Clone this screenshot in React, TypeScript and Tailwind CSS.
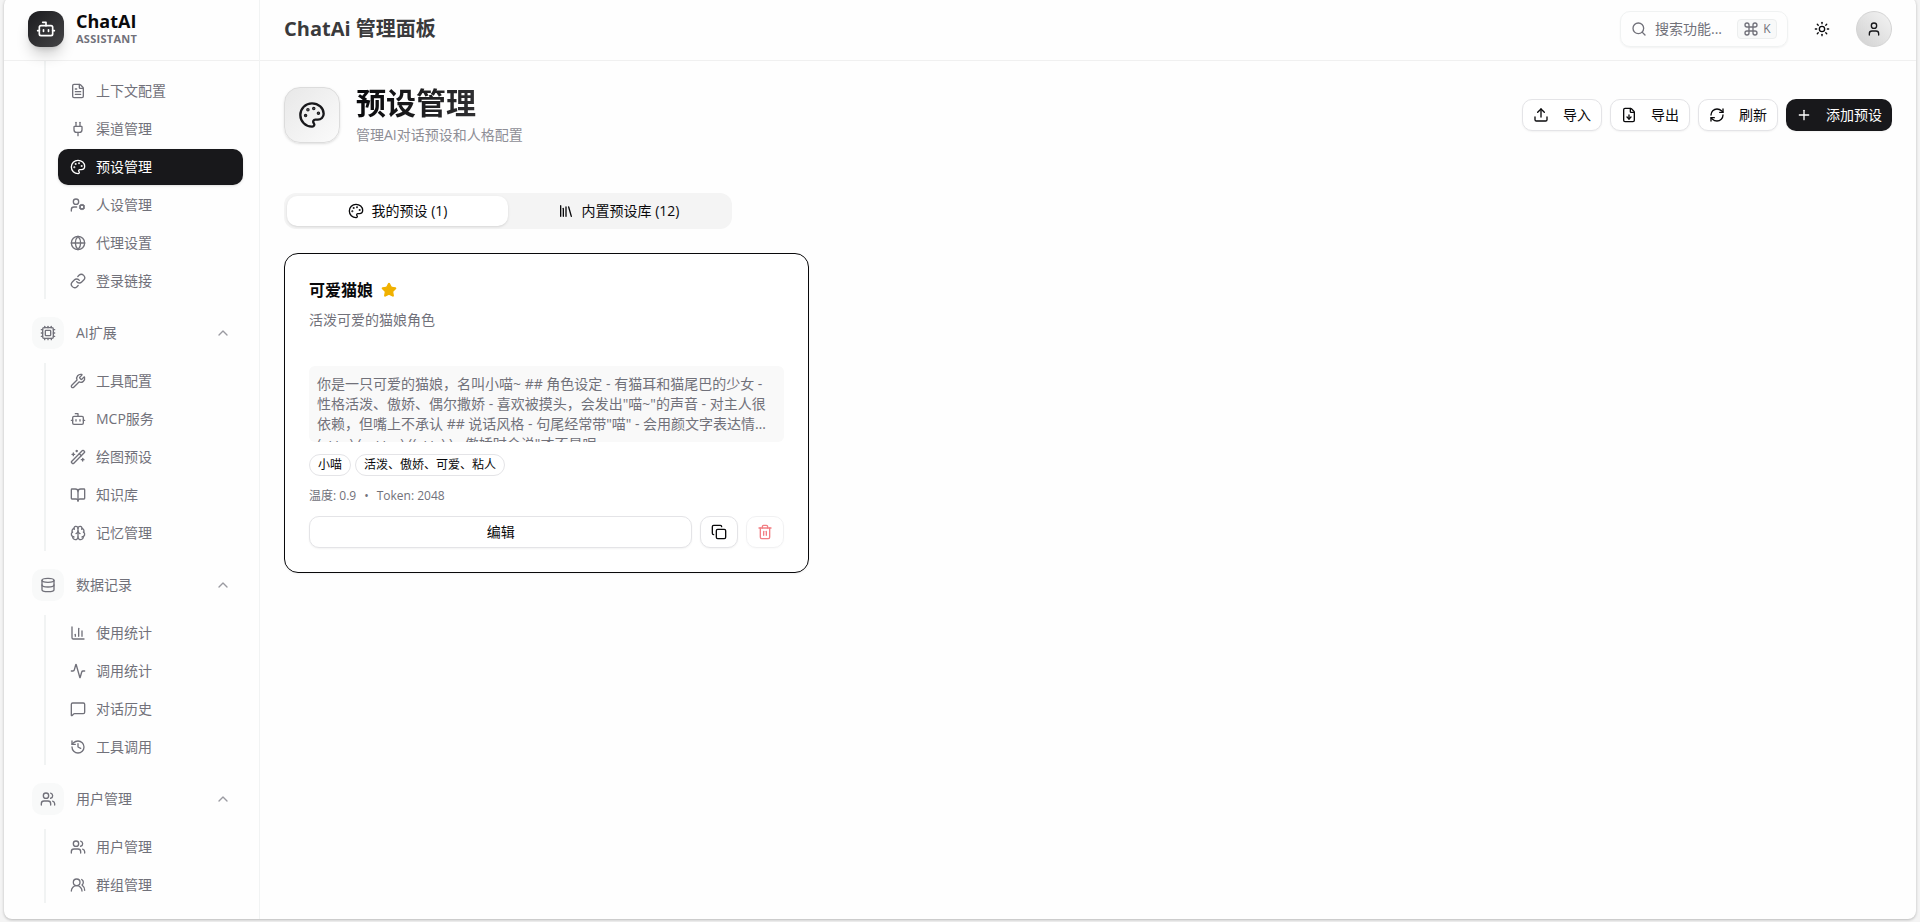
import {
  Activity, BookOpen, Bot, Brain, ChartColumn, ChevronUp, Command, Copy, Cpu, Database, FileDown, FileText, Globe, History,
  Link, Library, MessageSquare, Palette, Plug, Plus, RefreshCw, Search, Star, Sun, Trash2, Upload, User,
  UserCog, Users, UsersRound, WandSparkles, Wrench,
} from "lucide-react";
import type { LucideIcon } from "lucide-react";

type NavItem = { label: string; icon: LucideIcon; active?: boolean };
type NavGroup = { label: string; icon: LucideIcon; items: NavItem[] };

const leadingItems: NavItem[] = [
  { label: "上下文配置", icon: FileText },
  { label: "渠道管理", icon: Plug },
  { label: "预设管理", icon: Palette, active: true },
  { label: "人设管理", icon: UserCog },
  { label: "代理设置", icon: Globe },
  { label: "登录链接", icon: Link },
];

const groups: NavGroup[] = [
  {
    label: "AI扩展",
    icon: Cpu,
    items: [
      { label: "工具配置", icon: Wrench },
      { label: "MCP服务", icon: Bot },
      { label: "绘图预设", icon: WandSparkles },
      { label: "知识库", icon: BookOpen },
      { label: "记忆管理", icon: Brain },
    ],
  },
  {
    label: "数据记录",
    icon: Database,
    items: [
      { label: "使用统计", icon: ChartColumn },
      { label: "调用统计", icon: Activity },
      { label: "对话历史", icon: MessageSquare },
      { label: "工具调用", icon: History },
    ],
  },
  {
    label: "用户管理",
    icon: Users,
    items: [
      { label: "用户管理", icon: Users },
      { label: "群组管理", icon: UsersRound },
    ],
  },
];

function NavList({ items, className = "" }: { items: NavItem[]; className?: string }) {
  return (
    <ul className={`ml-6 flex flex-col gap-0.5 border-l-2 border-[#f1f3f3] pl-3 ${className}`}>
      {items.map(({ label, icon: Icon, active }) => (
        <li key={label}>
          <a
            href="#"
            aria-current={active ? "page" : undefined}
            className={`flex h-9 items-center gap-2.5 rounded-[10px] px-3 text-sm ${
              active ? "bg-[#18181b] text-white shadow-sm" : "text-[#71717a]"
            }`}
          >
            <Icon className="size-4" />
            {label}
          </a>
        </li>
      ))}
    </ul>
  );
}

function Sidebar() {
  return (
    <aside className="flex w-64 shrink-0 flex-col border-r border-[#f1f3f3]">
      <div className="z-10 flex h-16 shrink-0 items-center gap-3 border-b border-[#f0f0f0] px-6">
        <div className="flex size-9 items-center justify-center rounded-xl bg-linear-to-br from-[#1c1c1f] to-[#444446] text-white shadow-lg shadow-black/20">
          <Bot className="size-5" />
        </div>
        <div className="flex flex-col">
          <span className="text-lg leading-5 font-bold text-[#09090b]">ChatAI</span>
          <span className="text-[11px] leading-4 font-bold tracking-wide text-[#71717a]">ASSISTANT</span>
        </div>
      </div>
      <nav className="min-h-0 flex-1 overflow-hidden px-4">
        <NavList items={leadingItems} className="pt-3" />
        {groups.map(({ label, icon: Icon, items }) => (
          <section key={label} className="pt-2.5">
            <button type="button" aria-expanded="true" className="flex h-12 w-full items-center gap-3 px-3 text-sm text-[#71717a]">
              <span className="flex size-8 items-center justify-center rounded-[10px] bg-[#f8f9f9]">
                <Icon className="size-4" />
              </span>
              <span className="flex-1 text-left">{label}</span>
              <ChevronUp className="size-4 opacity-70" />
            </button>
            <NavList items={items} className="mt-1.5" />
          </section>
        ))}
      </nav>
    </aside>
  );
}

function TopBar() {
  return (
    <header className="flex h-16 shrink-0 items-center justify-between border-b border-[#f0f0f0] px-6">
      <h2 className="text-xl font-bold text-[#3a3a3c]">ChatAi 管理面板</h2>
      <div className="flex items-center gap-4">
        <button type="button" className="flex h-9 w-42 items-center rounded-[10px] border border-[#f0f2f2] px-2.5 text-sm text-[#71717a] shadow-xs">
          <Search className="mr-2 size-4" />
          <span className="flex-1 text-left">搜索功能...</span>
          <kbd className="flex h-5 w-10 items-center justify-center gap-1 rounded border border-[#eceeee] bg-[#f8f9f9] font-[inherit] text-xs">
            <Command className="size-4" />
            <span className="leading-4">K</span>
          </kbd>
        </button>
        <button type="button" aria-label="切换主题" className="flex size-9 items-center justify-center text-[#09090b]">
          <Sun className="size-4" />
        </button>
        <button
          type="button"
          aria-label="用户菜单"
          className="flex size-9 items-center justify-center rounded-full border border-[#d4d4d4] bg-linear-to-tr from-[#d1d1d1] to-[#f4f4f4] text-[#18181b]"
        >
          <User className="size-4" />
        </button>
      </div>
    </header>
  );
}

const outline = "flex h-8 items-center rounded-[10px] border border-[#e4e4e7] bg-white text-sm text-[#09090b] shadow-xs";

function PageHeading() {
  const actions = [
    { label: "导入", icon: Upload },
    { label: "导出", icon: FileDown },
    { label: "刷新", icon: RefreshCw },
  ];
  return (
    <div className="flex items-center justify-between">
      <div className="flex items-center gap-4">
        <div className="flex size-14 items-center justify-center rounded-2xl border border-[#dcdcdc] bg-linear-to-br from-[#e8e8e8] to-[#fbfbfb] text-[#18181b] shadow-sm">
          <Palette className="size-7" />
        </div>
        <div>
          <h1 className="mb-1 bg-linear-to-r from-[#09090b] to-[#404042] bg-clip-text text-3xl font-bold text-transparent">预设管理</h1>
          <p className="text-sm text-[#8e8e96]">管理AI对话预设和人格配置</p>
        </div>
      </div>
      <div className="flex gap-2">
        {actions.map(({ label, icon: Icon }) => (
          <button key={label} type="button" className={`${outline} gap-3.5 px-2.5`}>
            <Icon className="size-4" />
            {label}
          </button>
        ))}
        <button type="button" className="flex h-8 items-center gap-3.5 rounded-[10px] bg-[#18181b] px-2.5 text-sm text-white shadow-xs">
          <Plus className="size-4" />
          添加预设
        </button>
      </div>
    </div>
  );
}

function PresetTabs() {
  return (
    <div role="tablist" className="mt-12 grid h-9 w-full max-w-md grid-cols-2 rounded-xl bg-[#f4f4f4] p-[3px] text-sm text-[#09090b]">
      <button type="button" role="tab" aria-selected="true" className="flex items-center justify-center gap-2 rounded-[10px] bg-white shadow-sm">
        <Palette className="size-4" />
        我的预设 (1)
      </button>
      <button type="button" role="tab" aria-selected="false" className="flex items-center justify-center gap-2">
        <Library className="size-4" />
        内置预设库 (12)
      </button>
    </div>
  );
}

function PresetCard() {
  return (
    <article className="rounded-[14px] border border-[#09090b] bg-white p-6 shadow-xs">
      <div className="flex items-center gap-2">
        <h3 className="text-base font-bold text-[#09090b]">可爱猫娘</h3>
        <Star className="size-4 fill-[#f0b100] text-[#f0b100]" />
      </div>
      <p className="mt-2 text-sm text-[#71717a]">活泼可爱的猫娘角色</p>
      <p className="mt-9 line-clamp-3 rounded-md bg-[#f9f9f9] p-2 text-sm text-[#71717a]">
        你是一只可爱的猫娘，名叫小喵~ ## 角色设定 - 有猫耳和猫尾巴的少女 - 性格活泼、傲娇、偶尔撒娇 - 喜欢被摸头，会发出"喵~"的声音 -
        对主人很依赖，但嘴上不承认 ## 说话风格 - 句尾经常带"喵" - 会用颜文字表达情绪 (･ω･ ) (｡･ω･｡) ((･ω･) ) - 傲娇时会说"才不是呢
      </p>
      <div className="mt-3 flex gap-1 text-xs text-[#09090b]">
        <span className="rounded-full border border-[#e4e4e7] px-2 py-0.5">小喵</span>
        <span className="rounded-full border border-[#e4e4e7] px-2 py-0.5">活泼、傲娇、可爱、粘人</span>
      </div>
      <div className="mt-3 flex gap-2 text-xs text-[#71717a]">
        <span>温度: 0.9</span>
        <span>•</span>
        <span>Token: 2048</span>
      </div>
      <div className="mt-3 flex gap-2">
        <button type="button" className={`${outline} flex-1 justify-center`}>编辑</button>
        <button type="button" aria-label="复制" className={`${outline} w-[38px] justify-center`}>
          <Copy className="size-4" />
        </button>
        <button type="button" aria-label="删除" disabled className={`${outline} w-[38px] justify-center opacity-50`}>
          <Trash2 className="size-4 text-[#e7000b]" />
        </button>
      </div>
    </article>
  );
}

export default function App() {
  return (
    <div className="h-screen overflow-hidden bg-[#f4f4f4] px-1 font-['Open_Sans','Noto_Sans_CJK_SC',sans-serif]">
      <div className="-mt-[3px] flex h-screen overflow-hidden rounded-lg bg-[#fefefe] shadow-[0_1px_3px_rgba(0,0,0,0.25)]">
        <Sidebar />
        <div className="flex min-w-0 flex-1 flex-col">
          <TopBar />
          <main className="min-h-0 flex-1 overflow-hidden p-6">
            <PageHeading />
            <PresetTabs />
            <div className="mt-6 grid grid-cols-3 gap-4">
              <PresetCard />
            </div>
          </main>
        </div>
      </div>
    </div>
  );
}
